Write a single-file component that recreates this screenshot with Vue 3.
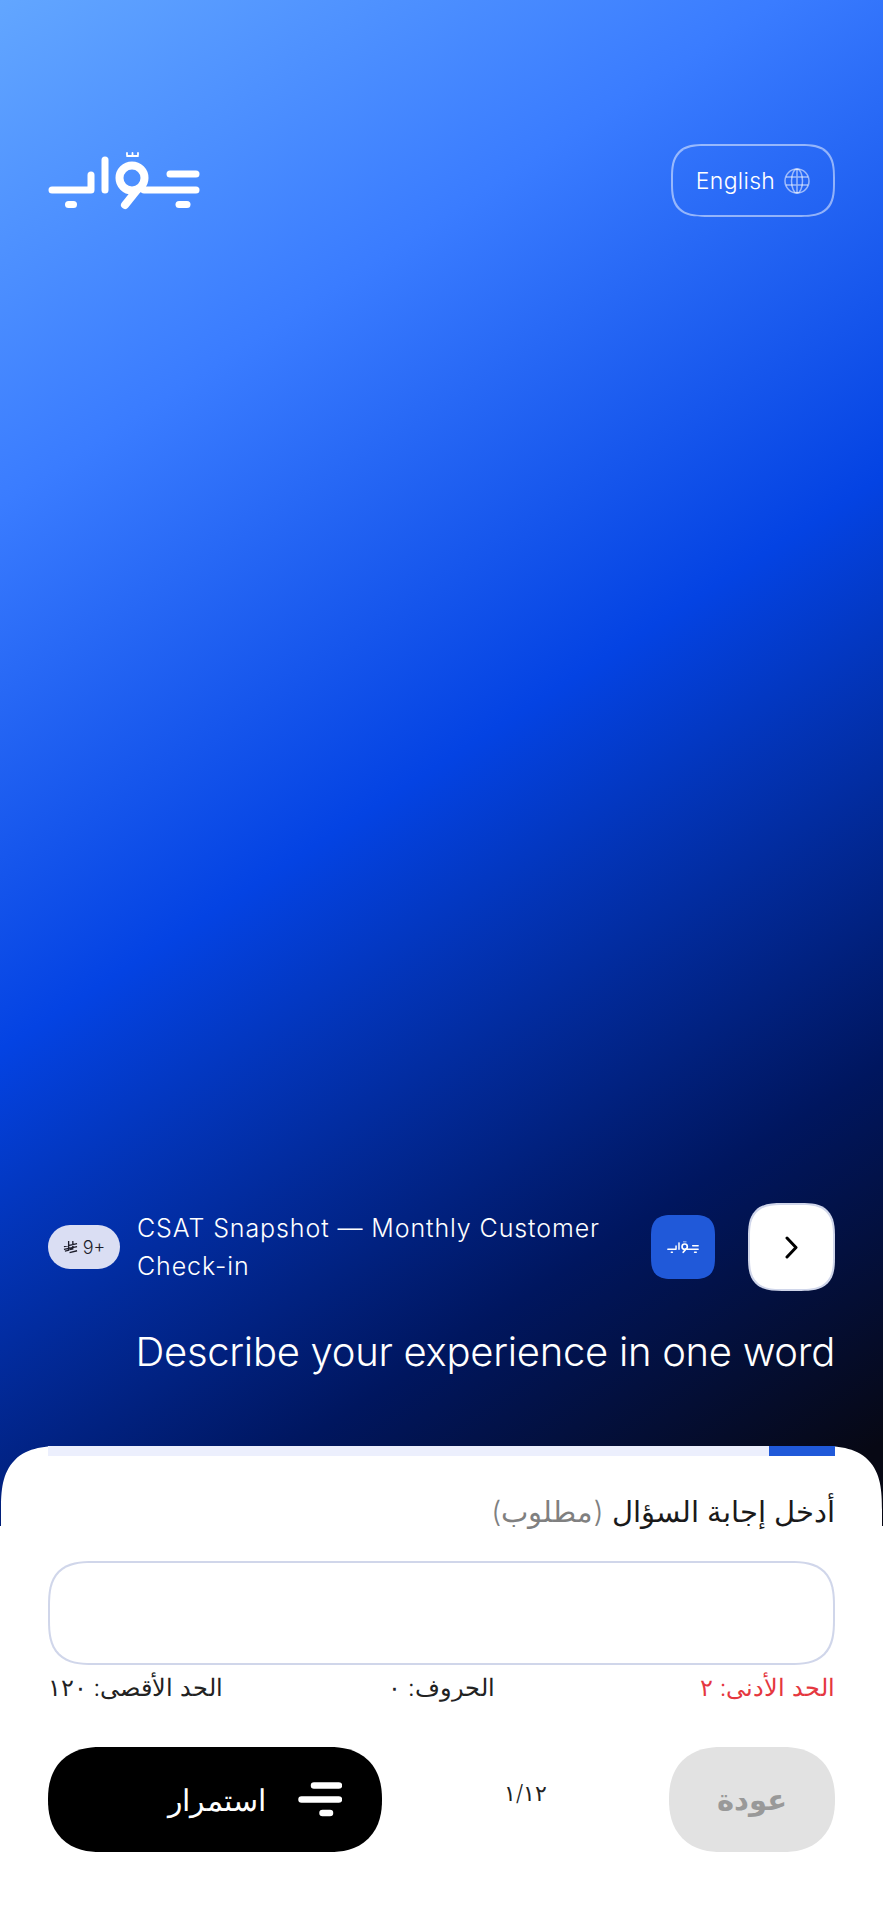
<template>
  <div class="page">
    <header class="top">
      <svg class="logo" viewBox="0 0 152 60" fill="none">
        <g id="jawab-logo" stroke="#fff" stroke-width="7" stroke-linecap="round" stroke-linejoin="round">
          <path d="M4 38H43V23" />
          <path d="M57 8V38" />
          <circle cx="84" cy="26" r="12.500" stroke-width="8" />
          <path d="M89 38L77 53" stroke-width="8" />
          <path d="M96 38H148" />
          <path d="M122 22H148" />
          <path d="M131 52.500H139" />
          <path d="M20.500 52.500H25.500" />
          <path d="M79 4H90M79 1V3M84.500 1V3M90 1V3" stroke-width="1.800" />
        </g>
      </svg>
      <button class="lang">
        <span>English</span>
        <svg class="globe" viewBox="0 0 26 26" fill="none">
          <circle cx="13" cy="13" r="12" />
          <ellipse cx="13" cy="13" rx="5.500" ry="12" />
          <path d="M13 1V25M2 9H24M2 17H24" />
        </svg>
      </button>
    </header>

    <section class="survey">
      <div class="badge">
        <svg class="riyal" viewBox="0 0 16 14" fill="none">
          <path d="M6 0.500V10.500L2 11.500M10.500 0.500V9L7 9.800M1 6.500L15 3.500M1 9.500L15 6.500M7 13L15 11" />
        </svg>
        <span>9+</span>
      </div>
      <p class="survey-title">{{ surveyTitle }}</p>
      <div class="tile">
        <svg viewBox="0 0 152 60" fill="none"><use href="#jawab-logo" /></svg>
      </div>
      <button class="next">
        <svg viewBox="0 0 13 23" fill="none">
          <path d="M2 2L11 11.500L2 21" />
        </svg>
      </button>
    </section>

    <h1 class="question">{{ question }}</h1>

    <section class="sheet" dir="rtl">
      <div class="progress">
        <div class="progress-fill" :style="{ width: progress + '%' }"></div>
      </div>
      <label class="field-label">أدخل إجابة السؤال <span>(مطلوب)</span></label>
      <div class="answer"></div>
      <div class="limits">
        <span class="min">الحد الأدنى: ٢</span>
        <span>الحروف: ٠</span>
        <span class="max">الحد الأقصى: ١٢٠</span>
      </div>
      <div class="actions">
        <button class="back">عودة</button>
        <span class="count">١/١٢</span>
        <button class="continue">
          <svg viewBox="0 0 44 35" fill="none">
            <path d="M16 3.500H41M3.500 17.500H41M24.500 31H32" />
          </svg>
          <span>استمرار</span>
        </button>
      </div>
    </section>
  </div>
</template>

<script setup>
const surveyTitle = 'CSAT Snapshot — Monthly Customer Check-in';
const question = 'Describe your experience in one word';
const progress = 8.4;
</script>

<style scoped>
.page {
  height: 1920px;
  display: flex;
  flex-direction: column;
  overflow: hidden;
  font-family: Inter, "DejaVu Sans", sans-serif;
  font-weight: 300;
  background:
    linear-gradient(#fff, #fff) bottom / 100% 394px no-repeat,
    linear-gradient(147deg, #62a6ff 0%, #3a7cff 24%, #0443e3 50%, #00165f 78%, #070814 96%) top / 100% 1526px no-repeat;
}
.top {
  display: flex;
  justify-content: space-between;
  align-items: flex-start;
  padding: 144px 48px 0;
}
.logo {
  width: 152px;
  height: 60px;
  margin-top: 8px;
}
.lang {
  width: 164px;
  height: 73px;
  display: flex;
  align-items: center;
  justify-content: center;
  gap: 9px;
  color: #fff;
  font: inherit;
  font-size: 23px;
  letter-spacing: 0.3px;
  background: transparent;
  border: 2px solid rgba(255, 255, 255, 0.5);
  border-radius: 34px;
  corner-shape: superellipse(1.5);
}
.globe {
  width: 26px;
  height: 26px;
  stroke: rgba(255, 255, 255, 0.55);
  stroke-width: 1.500;
}
.survey {
  margin-top: auto;
  display: flex;
  align-items: center;
  padding: 0 48px;
}
.badge {
  width: 72px;
  height: 44px;
  flex: none;
  display: flex;
  align-items: center;
  justify-content: center;
  gap: 5px;
  background: #dadef3;
  color: #1c1c2a;
  font-size: 18px;
  border-radius: 22px;
}
.riyal {
  width: 15px;
  height: 14px;
  stroke: #1c1c2a;
  stroke-width: 1.400;
}
.survey-title {
  flex: 1;
  margin: 0 0 0 17px;
  padding-right: 30px;
  color: #fff;
  font-size: 25px;
  letter-spacing: 0.9px;
  line-height: 38px;
}
.tile {
  width: 64px;
  height: 64px;
  flex: none;
  display: flex;
  align-items: center;
  justify-content: center;
  background: #2059d9;
  border-radius: 22px;
  corner-shape: superellipse(1.5);
}
.tile svg {
  width: 32px;
  height: 13px;
}
.next {
  width: 87px;
  height: 88px;
  flex: none;
  margin-left: 33px;
  padding: 0;
  display: flex;
  align-items: center;
  justify-content: center;
  background: #fff;
  border: 2px solid #d0d6ea;
  border-radius: 34px;
  corner-shape: superellipse(1.5);
}
.next svg {
  width: 13px;
  height: 23px;
  stroke: #000;
  stroke-width: 3;
  stroke-linecap: round;
  stroke-linejoin: round;
}
.question {
  margin: 35px 48px 0;
  color: #fff;
  font-size: 40px;
  font-weight: 300;
  letter-spacing: -0.28px;
  line-height: 52px;
  text-align: right;
}
.sheet {
  height: 474px;
  margin: 68px 1px 0;
  padding: 0 47px;
  box-sizing: border-box;
  background: #fff;
  border-radius: 64px 64px 0 0;
  corner-shape: superellipse(1.5);
}
.progress {
  height: 10px;
  background: #eceffd;
}
.progress-fill {
  height: 100%;
  background: #2059d9;
}
.field-label {
  display: block;
  margin-top: 38px;
  color: #1a1a1a;
  font-size: 29px;
  line-height: 36px;
}
.field-label span {
  color: #808080;
}
.answer {
  height: 104px;
  margin-top: 31px;
  box-sizing: border-box;
  border: 2px solid #d0d6ea;
  border-radius: 46px;
  corner-shape: superellipse(1.5);
}
.limits {
  display: grid;
  grid-template-columns: 1fr auto 1fr;
  margin-top: 8px;
  color: #222;
  font-size: 23.500px;
  line-height: 30px;
}
.min {
  color: #e5383f;
}
.max {
  justify-self: end;
}
.actions {
  display: flex;
  justify-content: space-between;
  align-items: center;
  margin-top: 44px;
}
.back {
  width: 166px;
  height: 105px;
  color: #999;
  font: inherit;
  font-size: 29px;
  font-weight: 700;
  background: #e2e2e2;
  border: 0;
  border-radius: 52px;
  corner-shape: superellipse(1.2);
}
.count {
  color: #222;
  font-size: 22px;
  margin-top: -13px;
}
.continue {
  width: 334px;
  height: 105px;
  display: flex;
  align-items: center;
  gap: 32px;
  padding: 0 40px;
  color: #fff;
  font: inherit;
  font-size: 30px;
  background: #000;
  border: 0;
  border-radius: 52px;
  corner-shape: superellipse(1.2);
}
.continue svg {
  width: 44px;
  height: 35px;
  stroke: #fff;
  stroke-width: 6.500;
  stroke-linecap: round;
}
</style>
